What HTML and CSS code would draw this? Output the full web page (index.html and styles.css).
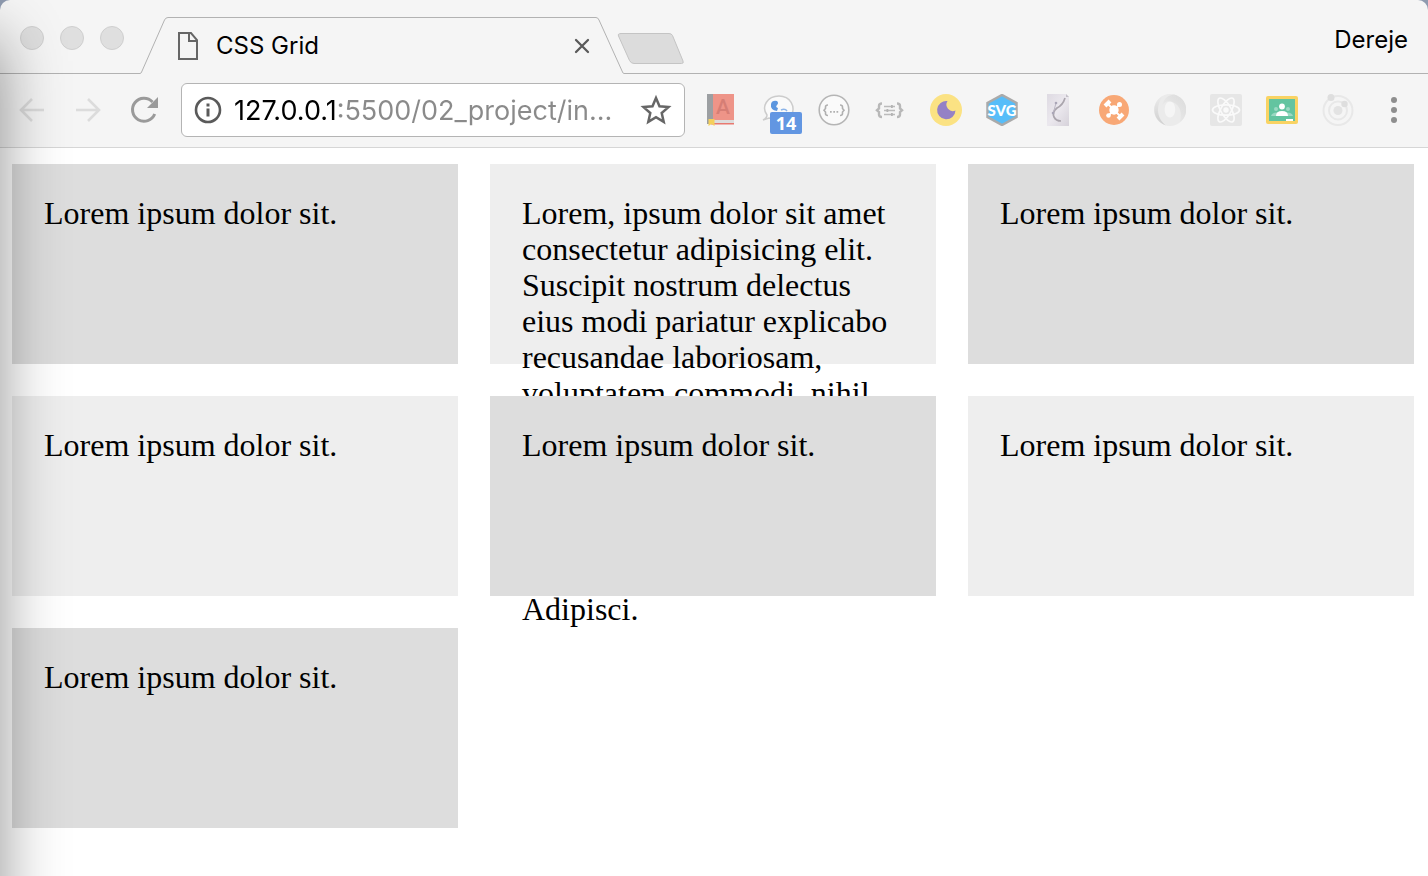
FILE: index.html
```html
<!DOCTYPE html>
<html lang="en">
<head>
<meta charset="utf-8">
<title>CSS Grid</title>
<link rel="stylesheet" href="styles.css">
</head>
<body>
<div class="window">
  <header class="chrome">
    <div class="tab-strip">
      <div class="lights">
        <button class="light" aria-label="Close window"></button>
        <button class="light" aria-label="Minimize window"></button>
        <button class="light" aria-label="Zoom window"></button>
      </div>
      <div class="tab">
        <svg class="slope" viewBox="0 0 28 57" aria-hidden="true"><path d="M0 56.5Q1 56.5 1.6 55L24.5 3Q25.6 .5 28 .5" fill="none" stroke="#b2b2b2"/></svg>
        <div class="tab-body">
          <svg class="page-icon" viewBox="0 0 22 28" aria-hidden="true"><path d="M2 1h12l6 7v19H2zM12 1v8h8" fill="none" stroke="#666" stroke-width="2"/></svg>
          <span class="tab-title">CSS Grid</span>
          <button class="icon-button tab-close" aria-label="Close tab"><svg width="16" height="16" viewBox="0 0 16 16"><path d="M2 2l12 12M14 2L2 14" stroke="#5a5a5a" stroke-width="2.3" stroke-linecap="round"/></svg></button>
        </div>
        <svg class="slope" viewBox="0 0 28 57" aria-hidden="true"><path d="M0 .5Q2 .5 3 3L26.500 55Q27 56.500 28 56.5" fill="none" stroke="#b2b2b2"/></svg>
      </div>
      <div class="strip-rest">
        <button class="icon-button new-tab" aria-label="New tab"><svg width="68" height="34" viewBox="0 0 68 34"><path d="M4 1.5H52Q54.500 1.500 55.500 3.500L66 29Q67 31.500 64.500 31.500H17Q14 31.500 12.500 28.500L1.500 4Q.5 1.500 4 1.500z" fill="#dcdcdc" stroke="#c4c4c4"/></svg></button>
        <button class="profile">Dereje</button>
      </div>
    </div>
    <div class="toolbar">
      <button class="icon-button tool" aria-label="Back"><svg width="28" height="28" viewBox="0 0 28 28"><path d="M26 14H3M14 3L3 14l11 11" fill="none" stroke="#dcdcdc" stroke-width="2.600"/></svg></button>
      <button class="icon-button tool" aria-label="Forward"><svg width="28" height="28" viewBox="0 0 28 28"><path d="M2 14h23M14 3l11 11-11 11" fill="none" stroke="#dcdcdc" stroke-width="2.600"/></svg></button>
      <button class="icon-button tool" aria-label="Reload"><svg width="28" height="28" viewBox="0 0 28 28"><path d="M24.700 18A11.500 11.500 0 1 1 22.500 6" fill="none" stroke="#9a9a9a" stroke-width="3"/><path d="M28 1v11H17z" fill="#9a9a9a"/></svg></button>
      <div class="address">
        <button class="icon-button" aria-label="Site information"><svg width="28" height="28" viewBox="0 0 28 28"><circle cx="14" cy="14" r="12" fill="none" stroke="#5a5a5a" stroke-width="2.600"/><path d="M12.500 7.500h3v3h-3zM12.500 12.500h3v8h-3z" fill="#5a5a5a"/></svg></button>
        <input class="url" type="text" aria-label="Address" value="127.0.0.1:5500/02_project/in...">
        <button class="icon-button" aria-label="Bookmark this page"><svg width="32" height="32" viewBox="0 0 32 32"><path d="M16 4l3.500 8.300 9 .8-6.800 5.900 2 8.800L16 23.100l-7.700 4.700 2-8.800-6.800-5.900 9-.8z" fill="none" stroke="#666" stroke-width="2.500"/></svg></button>
      </div>
      <div class="extensions">
        <button class="icon-button tool" aria-label="Dictionary"><svg width="32" height="32" viewBox="0 0 32 32"><path d="M2 0h26v26H2z" fill="#ee9488"/><path d="M1 0h6v30H1z" fill="#9c9fa2"/><path d="M7 26h21v3H7z" fill="#ddd"/><path d="M5 29h23v1.500H5z" fill="#e87970"/><text x="10" y="20" font-family="Roboto, sans-serif" font-size="21" font-weight="500" fill="#d67e75">A</text><path d="M2.500 25h6v7l-3-2-3 2z" fill="#f4d05c"/></svg></button>
        <button class="icon-button tool messages" aria-label="Messages, 14 new"><svg width="32" height="32" viewBox="0 0 32 32"><path d="M5 21C-1 13 5 2 17 2S33 13 30 20 18 28 7 24L1 26q4-2 4-5z" fill="#fafafa" stroke="#ccc" stroke-width="1.500"/><path d="M15 7q-5-1-6 3-1 6 6 7l1-3q-3-1-1-3 2-2 0-4z" fill="#5c96df"/><path d="M19 16q4-2 6 1" fill="none" stroke="#8db5e9" stroke-width="1.500"/></svg><span class="badge">14</span></button>
        <button class="icon-button tool" aria-label="JSON formatter"><svg width="32" height="32" viewBox="0 0 32 32"><circle cx="16" cy="16" r="14.800" fill="#fafafa" stroke="#b5b5b5" stroke-width="1.600"/><path d="M10 11q-2.500 0-2.500 2v1.500L6 16.300l1.500 1.700v1.500q0 2 2.500 2M22 11q2.500 0 2.500 2v1.500l1.500 1.800-1.500 1.700v1.500q0 2-2.500 2" fill="none" stroke="#b0b0b0" stroke-width="1.600"/><path d="M12 17h1.700v1.700H12zM15.300 17H17v1.700h-1.700zM18.500 17h1.700v1.700h-1.700z" fill="#b0b0b0"/></svg></button>
        <button class="icon-button tool" aria-label="JSON viewer"><svg width="32" height="32" viewBox="0 0 32 32"><path d="M8 9.500q-3 0-3 2.500v2.500L3 16.300l2 1.700v2.500Q5 23 8 23M23 9.500q3 0 3 2.500v2.500l2 1.800-2 1.700v2.500q0 2.500-3 2.500" fill="none" stroke="#b8b8b8" stroke-width="2.400"/><path d="M10 12.500h11M10 16.500h11M10 20.500h11" stroke="#bbb" stroke-width="1.400"/><path d="M17 11h1.800v3H17zM12.500 15h1.800v3h-1.800zM17 19h1.800v3H17z" fill="#b4b4b4"/></svg></button>
        <button class="icon-button tool" aria-label="Dark mode"><svg width="32" height="32" viewBox="0 0 32 32"><circle cx="16" cy="16" r="16" fill="#fbe283"/><path d="M17.500 7A9.200 9.200 0 1 0 25.500 16.500A6.500 6.500 0 0 1 17.500 7z" fill="#9581c5"/></svg></button>
        <button class="icon-button tool" aria-label="SVG tools"><svg width="32" height="32" viewBox="0 0 32 32"><path d="M16 1l14.500 8v14L16 31 1.500 23V9z" fill="#57bdf9" stroke="#aaa" stroke-width="2.500"/><text x="16" y="21.500" text-anchor="middle" font-family="Lato, sans-serif" font-size="15" font-weight="900" fill="#fff">SVG</text></svg></button>
        <button class="icon-button tool" aria-label="Vector editor"><svg width="32" height="32" viewBox="0 0 32 32"><defs><linearGradient id="paper" x2="1" y2="1"><stop stop-color="#dedae2"/><stop offset=".5" stop-color="#ebe8ee"/><stop offset="1" stop-color="#d6d2da"/></linearGradient></defs><path d="M5 0h19l3 3v29H5z" fill="url(#paper)"/><path d="M24 0v3h3z" fill="#c4c0c8"/><path d="M23 4Q21 11 15 14q-5 4-3 9 2 4 7 4" fill="none" stroke="#aaa5ad" stroke-width="1.700"/><path d="M14 9l-3 11" stroke="#bbb6c4"/><circle cx="14" cy="9" r="1.300" fill="#aaa6b7"/><circle cx="11" cy="19" r="1.300" fill="#aaa6b7"/></svg></button>
        <button class="icon-button tool" aria-label="Drone"><svg width="32" height="32" viewBox="0 0 32 32"><circle cx="16" cy="16" r="15" fill="#f8a876"/><path d="M10 10l12 12M22 10L10 22" stroke="#fff" stroke-width="1.800"/><circle cx="16" cy="16" r="4.700" fill="#fff"/><circle cx="21.500" cy="10.500" r="2.500" fill="#fff"/><circle cx="10.500" cy="21.500" r="2.300" fill="#fff"/><path d="M7 12l5-5M20 25l5-5" stroke="#fff" stroke-width="4"/></svg></button>
        <button class="icon-button tool" aria-label="JSON"><svg width="32" height="32" viewBox="0 0 32 32"><defs><linearGradient id="ring-a" x1="0" y1="1" x2="1" y2="0"><stop stop-color="#efefef"/><stop offset="1" stop-color="#dadada"/></linearGradient><linearGradient id="ring-b" x2="0" y2="1"><stop stop-color="#ebebeb"/><stop offset="1" stop-color="#cfcfcf"/></linearGradient></defs><path fill-rule="evenodd" d="M16 0a16 16 0 1 1 0 32a16 16 0 1 1 0-32zM16 7.500c-7 0-7 16 0 16s7-16 0-16z" fill="#ebebeb"/><path d="M20 .5C34 4 36 21 26 28c2-9 1-17-9-20.500-5-1-8 2-9 5C9 6 13 1 20 .5z" fill="url(#ring-a)"/><path d="M9 2C-3 8-3 26 12 31.500 3 25 1 12 9 2z" fill="url(#ring-b)"/></svg></button>
        <button class="icon-button tool" aria-label="React tools"><svg width="32" height="32" viewBox="0 0 32 32"><rect width="32" height="32" rx="2" fill="#e6e6e6"/><g fill="none" stroke="#fafafa" stroke-width="1.700"><ellipse cx="16" cy="16" rx="13.500" ry="5.200"/><ellipse cx="16" cy="16" rx="13.500" ry="5.200" transform="rotate(60 16 16)"/><ellipse cx="16" cy="16" rx="13.500" ry="5.200" transform="rotate(120 16 16)"/></g><circle cx="16" cy="16" r="2.700" fill="#fafafa"/></svg></button>
        <button class="icon-button tool" aria-label="Classroom"><svg width="32" height="32" viewBox="0 0 32 32"><rect y="2" width="32" height="28" rx="2" fill="#f9d363"/><path d="M3 5h26v22H3z" fill="#63c4a0"/><g fill="#9ad9c2"><circle cx="10" cy="15" r="2"/><circle cx="22" cy="15" r="2"/><path d="M5 22q1-4 7-3.500v3.500zM27 22q-1-4-7-3.500v3.500z"/></g><circle cx="16" cy="12.500" r="2.900" fill="#fff"/><path d="M10 22q0-5 6-5t6 5z" fill="#fff"/><path d="M20 25h7v2h-7z" fill="#fff"/></svg></button>
        <button class="icon-button tool" aria-label="Orbit"><svg width="32" height="32" viewBox="0 0 32 32"><circle cx="16" cy="16.500" r="14.500" fill="none" stroke="#e8e8e8" stroke-width="2"/><circle cx="16" cy="16.500" r="9" fill="none" stroke="#e8e8e8" stroke-width="2"/><circle cx="16" cy="16.500" r="4.500" fill="#e3e3e3"/><circle cx="9" cy="3.500" r="3.500" fill="#dedede"/><circle cx="22.500" cy="10" r="3.200" fill="#dedede"/></svg></button>
        <button class="icon-button tool" aria-label="Menu"><svg width="8" height="28" viewBox="0 0 8 28"><g fill="#8e8e8e"><circle cx="4" cy="4" r="3"/><circle cx="4" cy="14" r="3"/><circle cx="4" cy="24" r="3"/></g></svg></button>
      </div>
    </div>
  </header>
  <main class="grid">
    <div class="cell">Lorem ipsum dolor sit.</div>
    <div class="cell">
      <p class="copy">Lorem, ipsum dolor sit amet consectetur adipisicing elit. Suscipit nostrum delectus eius modi pariatur explicabo recusandae laboriosam, voluptatem commodi, nihil</p>
      <p class="copy closing">Adipisci.</p>
    </div>
    <div class="cell">Lorem ipsum dolor sit.</div>
    <div class="cell">Lorem ipsum dolor sit.</div>
    <div class="cell">Lorem ipsum dolor sit.</div>
    <div class="cell">Lorem ipsum dolor sit.</div>
    <div class="cell">Lorem ipsum dolor sit.</div>
  </main>
</div>
</body>
</html>
```
FILE: styles.css
```css
* {
  box-sizing: border-box;
}

body {
  margin: 0;
  background: #fff;
  color: #000;
  font-family: Inter, sans-serif;
}

.window {
  position: relative;
  min-height: 100vh;
  overflow: hidden;
  background: linear-gradient(#8f9bb0 20px, #fff 20px);
}

/* Soft shadow over the left edge */
.window::after {
  content: "";
  position: absolute;
  z-index: 2;
  top: 40px;
  bottom: -200px;
  left: -200px;
  width: 200px;
  box-shadow: 0 0 60px rgba(0, 0, 0, 0.43);
  pointer-events: none;
}

.chrome {
  border-bottom: 1px solid #d6d6d6;
  border-radius: 10px 10px 0 0;
  background: #f5f5f5;
}

.icon-button,
.profile,
.light {
  padding: 0;
  border: 0;
  background: none;
}

.icon-button {
  display: flex;
  flex: none;
  align-items: center;
  justify-content: center;
}

.tab-strip {
  display: flex;
  height: 74px;
}

.lights {
  display: flex;
  flex: none;
  align-items: center;
  gap: 16px;
  width: 140px;
  padding: 3px 0 0 20px;
  border-bottom: 1px solid #b2b2b2;
}

.light {
  width: 24px;
  height: 24px;
  border: 1px solid #cfcfcf;
  border-radius: 50%;
  background: #dfdfdf;
}

.tab {
  display: flex;
  flex: 0 1 484px;
  margin-top: 17px;
}

.slope {
  flex: none;
  width: 28px;
  height: 57px;
}

.tab-body {
  display: flex;
  flex: 1;
  align-items: center;
  padding: 0 6px 0 9px;
  border-top: 1px solid #b2b2b2;
}

.page-icon {
  width: 22px;
  height: 28px;
}

.tab-title {
  flex: 1;
  margin-left: 17px;
  font-size: 24px;
  line-height: 28px;
}

.strip-rest {
  display: flex;
  flex: 1;
  align-items: center;
  justify-content: space-between;
  padding-right: 20px;
  border-bottom: 1px solid #b2b2b2;
}

.new-tab {
  margin: 24px 0 0 -7px;
}

.profile {
  margin-top: 6px;
  font: 24px/28px Inter, sans-serif;
}

.toolbar {
  display: flex;
  align-items: center;
  height: 73px;
  padding: 0 6px 2px 4px;
}

.tool {
  width: 56px;
  height: 56px;
}

.address {
  display: flex;
  flex: 1;
  align-items: center;
  min-width: 0;
  height: 54px;
  margin: 0 9px;
  padding: 0 12px;
  border: 1px solid #b4b4b4;
  border-radius: 6px;
  background: #fff;
}

/* The host is black, the rest of the address is grey */
.url {
  flex: 1;
  min-width: 0;
  margin: 0 4px 0 12px;
  padding: 2px 0 0;
  border: 0;
  background: linear-gradient(90deg, #000 105px, #8a8a8a 105px);
  background-clip: text;
  -webkit-text-fill-color: transparent;
  font: 27px/36px Inter, sans-serif;
}

.extensions {
  display: flex;
  flex: none;
}

.messages {
  position: relative;
}

.badge {
  position: absolute;
  top: 30px;
  left: 20px;
  width: 32px;
  border-radius: 2px;
  background: #6296e2;
  color: #fff;
  font: 700 18px/22px "Open Sans", sans-serif;
  text-align: center;
}

.grid {
  display: grid;
  grid-template-columns: repeat(3, 1fr);
  grid-auto-rows: 200px;
  gap: 32px;
  padding: 16px 14px 16px 12px;
  font: 32px/36px "Liberation Serif", serif;
}

.cell {
  min-width: 0;
  padding: 31px 32px;
  background: #eee;
}

.cell:nth-child(odd) {
  background: #ddd;
}

.copy {
  margin: 0;
}

/* The closing line comes out below the cell of the next row */
.closing {
  margin-top: 180px;
}
```
